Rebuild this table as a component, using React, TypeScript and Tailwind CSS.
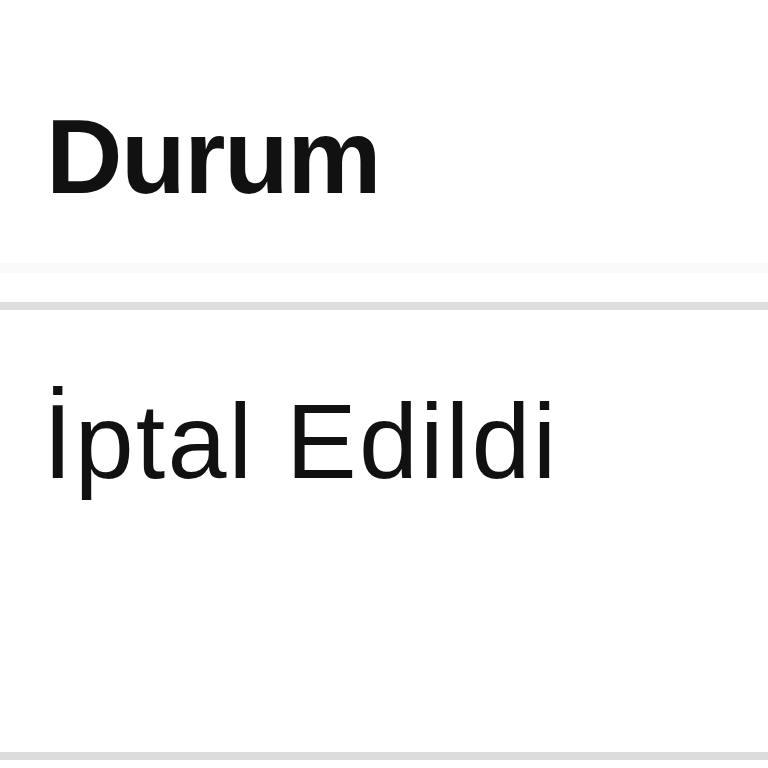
export default function App() {
  return (
    <div
      className="w-[768px] h-[768px] bg-white flex flex-col overflow-hidden text-[#111]"
      style={{ fontFamily: '"Liberation Sans", Arial, sans-serif' }}
    >
      <div className="h-[263px] shrink-0 pl-[46px] pt-[103px]">
        <div className="text-[106px] leading-[106px] font-bold tracking-[-1.5px]">Durum</div>
      </div>
      <div className="h-[10px] shrink-0 bg-[#fafafa]" />
      <div className="h-[29px] shrink-0" />
      <div className="h-[8px] shrink-0 bg-[#dedede]" />
      <div className="h-[442px] shrink-0 pl-[43px] pt-[78px]">
        <div className="text-[106px] leading-[106px] tracking-[2.2px]">İptal Edildi</div>
      </div>
      <div className="h-[8px] shrink-0 bg-[#dcdcdc]" />
      <div className="flex-1" />
    </div>
  );
}
